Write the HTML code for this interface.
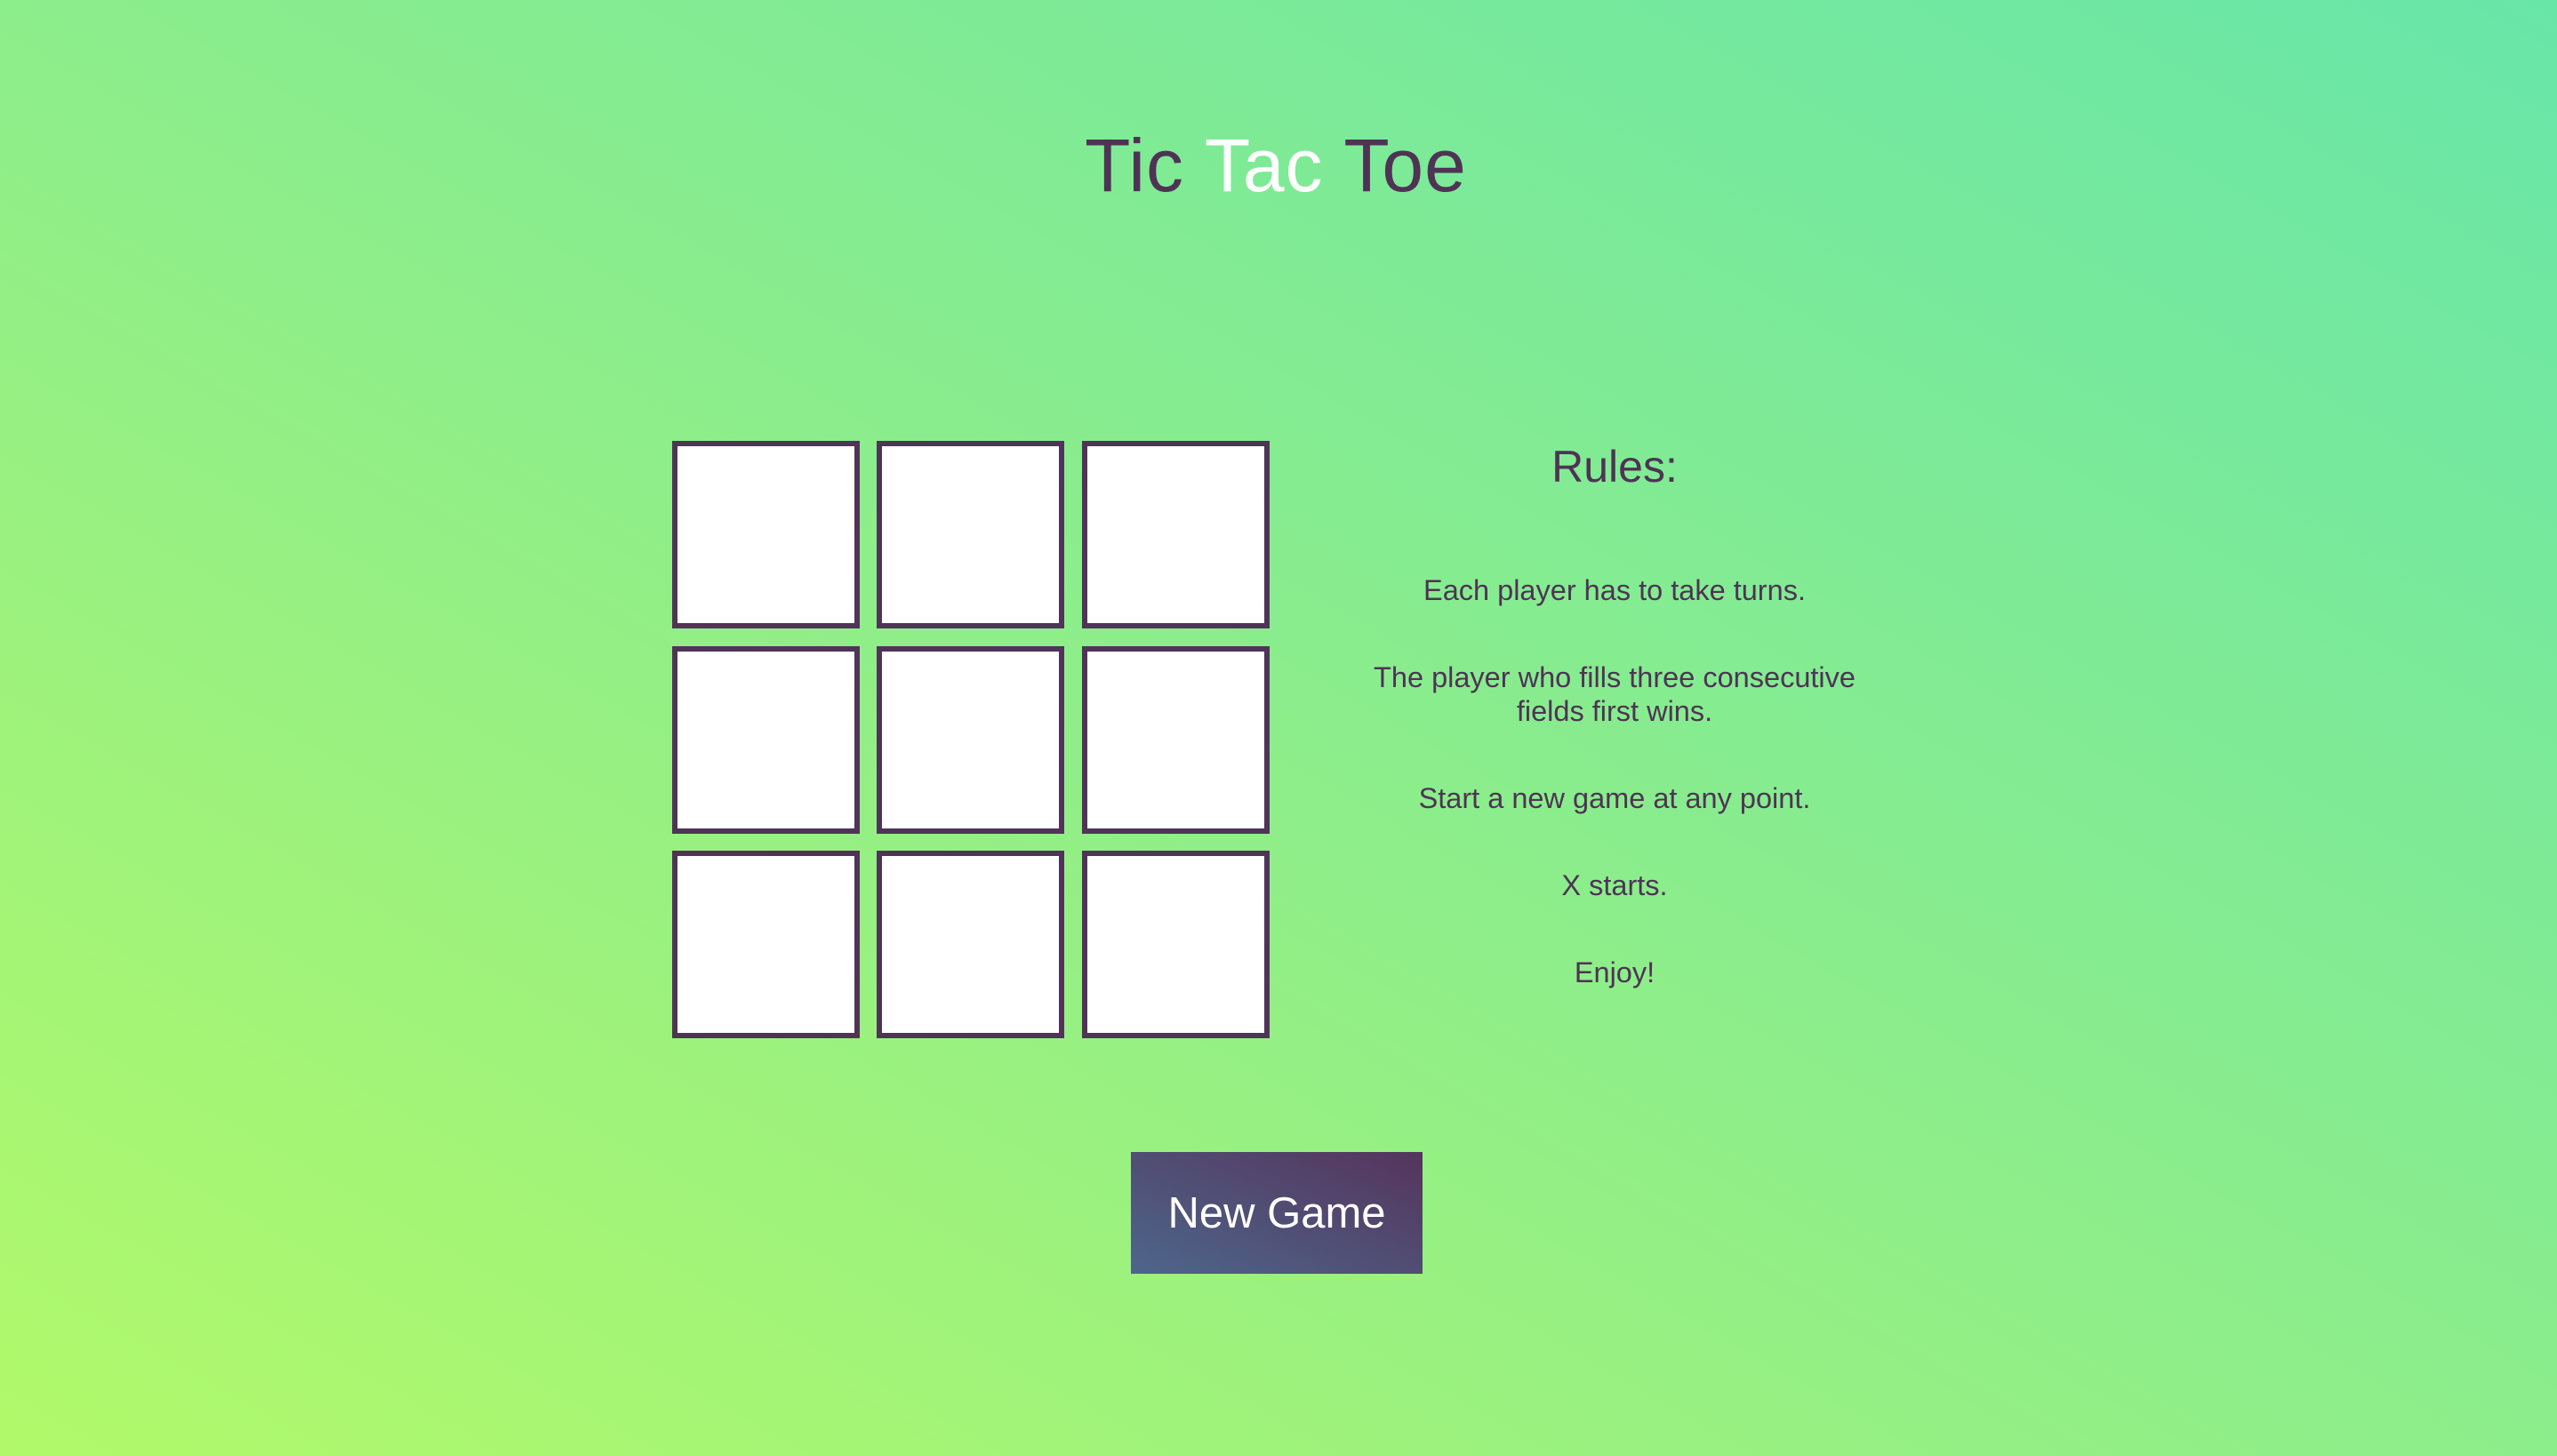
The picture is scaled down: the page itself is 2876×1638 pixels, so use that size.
<!DOCTYPE html>
<html><head><meta charset="utf-8"><style>
html,body{margin:0;padding:0;width:2876px;height:1638px;overflow:hidden}
body{background:linear-gradient(to top right,#b1f96a 0%,#90ee88 45%,#68e6a8 100%);font-family:"Liberation Sans",sans-serif;color:#4e3354;position:relative}
h1{position:absolute;left:0;width:2870px;top:136px;margin:0;text-align:center;font-weight:normal;font-size:84px;line-height:100px;letter-spacing:1px}
h1 span{color:#fff}
.cell{position:absolute;width:199px;height:199px;background:#fff;border:6px solid #4f3458}
.rules{position:absolute;left:1470px;width:692px;text-align:center}
.rules h2{position:absolute;left:0;width:100%;top:495px;margin:0;font-weight:normal;font-size:50px;line-height:60px}
.rules p{position:absolute;left:0;width:100%;margin:0;font-size:32.5px;line-height:38px}
.btn{position:absolute;left:1272px;top:1296px;width:328px;height:137px;background:linear-gradient(to top right,#4d668b 0%,#55345c 100%);color:#fff;font-size:49px;line-height:139px;text-align:center}
</style></head><body>
<h1>Tic <span>Tac</span> Toe</h1>
<div class="cell" style="left:756px;top:496px"></div>
<div class="cell" style="left:986px;top:496px"></div>
<div class="cell" style="left:1217px;top:496px"></div>
<div class="cell" style="left:756px;top:727px"></div>
<div class="cell" style="left:986px;top:727px"></div>
<div class="cell" style="left:1217px;top:727px"></div>
<div class="cell" style="left:756px;top:957px"></div>
<div class="cell" style="left:986px;top:957px"></div>
<div class="cell" style="left:1217px;top:957px"></div>
<div class="rules">
<h2>Rules:</h2>
<p style="top:645px">Each player has to take turns.</p>
<p style="top:743px">The player who fills three consecutive<br>fields first wins.</p>
<p style="top:879px">Start a new game at any point.</p>
<p style="top:977px">X starts.</p>
<p style="top:1075px">Enjoy!</p>
</div>
<div class="btn">New Game</div>
</body></html>
